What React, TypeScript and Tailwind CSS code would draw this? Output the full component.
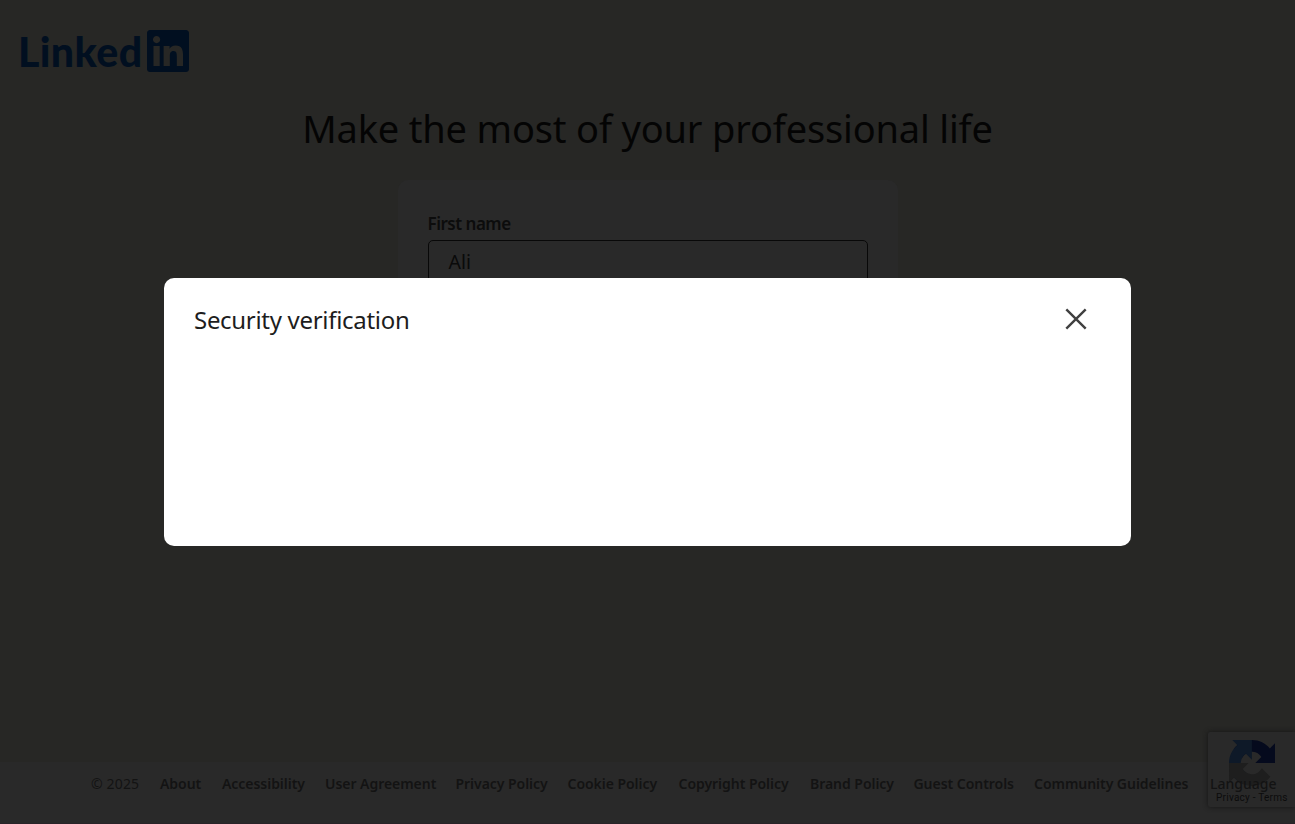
import React from "react";
import { FaLinkedin } from "react-icons/fa";

const links: { label: string; cls: string }[] = [
  { label: "About", cls: "w-[42px]" },
  { label: "Accessibility", cls: "w-[83px]" },
  { label: "User Agreement", cls: "w-[110.5px]" },
  { label: "Privacy Policy", cls: "w-[92px]" },
  { label: "Cookie Policy", cls: "w-[91px]" },
  { label: "Copyright Policy", cls: "w-[111.5px]" },
  { label: "Brand Policy", cls: "w-[83.5px]" },
  { label: "Guest Controls", cls: "w-[100.5px]" },
  { label: "Community Guidelines", cls: "w-[155px]" },
];

function RecaptchaMark() {
  return (
    <svg viewBox="0 0 64 64" className="h-[46px] w-[46px]">
      <path fill="#050a1d" d="M64 31.955l-.033-1.37V4.687l-7.16 7.16C50.948 4.674 42.033.093 32.05.093c-10.4 0-19.622 4.96-25.458 12.64l11.736 11.86a15.55 15.55 0 0 1 4.754-5.334c2.05-1.6 4.952-2.906 8.968-2.906.485 0 .86.057 1.135.163 4.976.393 9.288 3.14 11.828 7.124l-8.307 8.307L64 31.953" />
      <path fill="#0e1928" d="M31.862.094l-1.37.033H4.594l7.16 7.16C4.58 13.147 0 22.06 0 32.046c0 10.4 4.96 19.622 12.64 25.458L24.5 45.768a15.55 15.55 0 0 1-5.334-4.754c-1.6-2.05-2.906-4.952-2.906-8.968 0-.485.057-.86.163-1.135.393-4.976 3.14-9.288 7.124-11.828l8.307 8.307L31.86.095" />
      <path fill="#1e1e1e" d="M.001 32.045l.033 1.37v25.898l7.16-7.16c5.86 7.173 14.774 11.754 24.76 11.754 10.4 0 19.622-4.96 25.458-12.64l-11.736-11.86a15.55 15.55 0 0 1-4.754 5.334c-2.05 1.6-4.952 2.906-8.968 2.906-.485 0-.86-.057-1.135-.163-4.976-.393-9.288-3.14-11.828-7.124l8.307-8.307c-10.522.04-22.4.066-27.295-.005" />
    </svg>
  );
}

export default function App() {
  return (
    <div className="relative flex h-[824px] w-[1295px] flex-col overflow-hidden bg-[#272725] font-['Noto_Sans',sans-serif]">
      <header className="flex h-[101px] shrink-0 items-center pt-px pl-[18px] text-[#010f20]">
        <span className="w-[129px] pt-px whitespace-nowrap font-['Lato',sans-serif] text-[41px] leading-[48px] font-black tracking-[0.4px]">
          Linked
        </span>
        <FaLinkedin className="h-12 w-[42px]" />
      </header>

      <h1 className="h-[79px] shrink-0 text-center text-[38px] leading-[54px] font-normal tracking-[-0.17px] whitespace-nowrap text-[#040404]">
        Make the most of your professional life
      </h1>

      <main className="mx-auto flex h-[320px] w-[500px] shrink-0 flex-col rounded-[10px] bg-[#292929] px-[30px] pt-[32px]">
        <label className="h-[28px] text-[17px] leading-6 font-semibold tracking-[-0.5px] text-[#0c0c0c]">First name</label>
        <div className="flex h-[46px] items-center rounded-[5px] border border-[#080808] pb-[2px] pl-5 text-[19.5px] text-[#0a0a0a]">
          Ali
        </div>
      </main>

      <footer className="mt-auto flex h-[62px] shrink-0 gap-5 border-b border-[#292328] bg-[#292929] pt-[10px] pl-[91px] text-[14px] leading-6 font-semibold whitespace-nowrap text-[#131313]">
        <span className="w-[49px] shrink-0 font-normal tracking-[0.15px]">© 2025</span>
        {links.map((l) => (
          <a key={l.label} className={"shrink-0 tracking-[-0.04px] " + l.cls}>
            {l.label}
          </a>
        ))}
      </footer>

      <div className="absolute top-[732px] right-0 h-[75px] w-[87px] rounded-l-[2px] bg-[#292929] shadow-[0_0_5px_#141414]">
        <div className="flex flex-col pt-2 pl-[21px]">
          <RecaptchaMark />
        </div>
        <div className="absolute top-[59px] left-2 font-['Roboto',sans-serif] text-[10px] leading-[14px] tracking-[0.25px] whitespace-nowrap text-[#0c0c0c]">
          Privacy - Terms
        </div>
        <div className="absolute top-[40px] left-[2px] text-[14px] leading-6 font-medium text-[#131313]">Language</div>
      </div>

      <section className="absolute top-[278px] left-[164px] flex h-[268px] w-[967px] items-start justify-between rounded-[10px] bg-white pt-[24px] pr-[44px] pl-[30px]">
        <h2 className="text-[24px] leading-9 font-normal tracking-[-0.3px] whitespace-nowrap text-[#1d1d1d]">Security verification</h2>
        <svg viewBox="0 0 22 22" className="mt-[6px] h-[22px] w-[22px]" stroke="#404040" strokeWidth="2.4">
          <path d="M1.3 1.3 20.7 20.7M20.7 1.3 1.3 20.7" />
        </svg>
      </section>
    </div>
  );
}
